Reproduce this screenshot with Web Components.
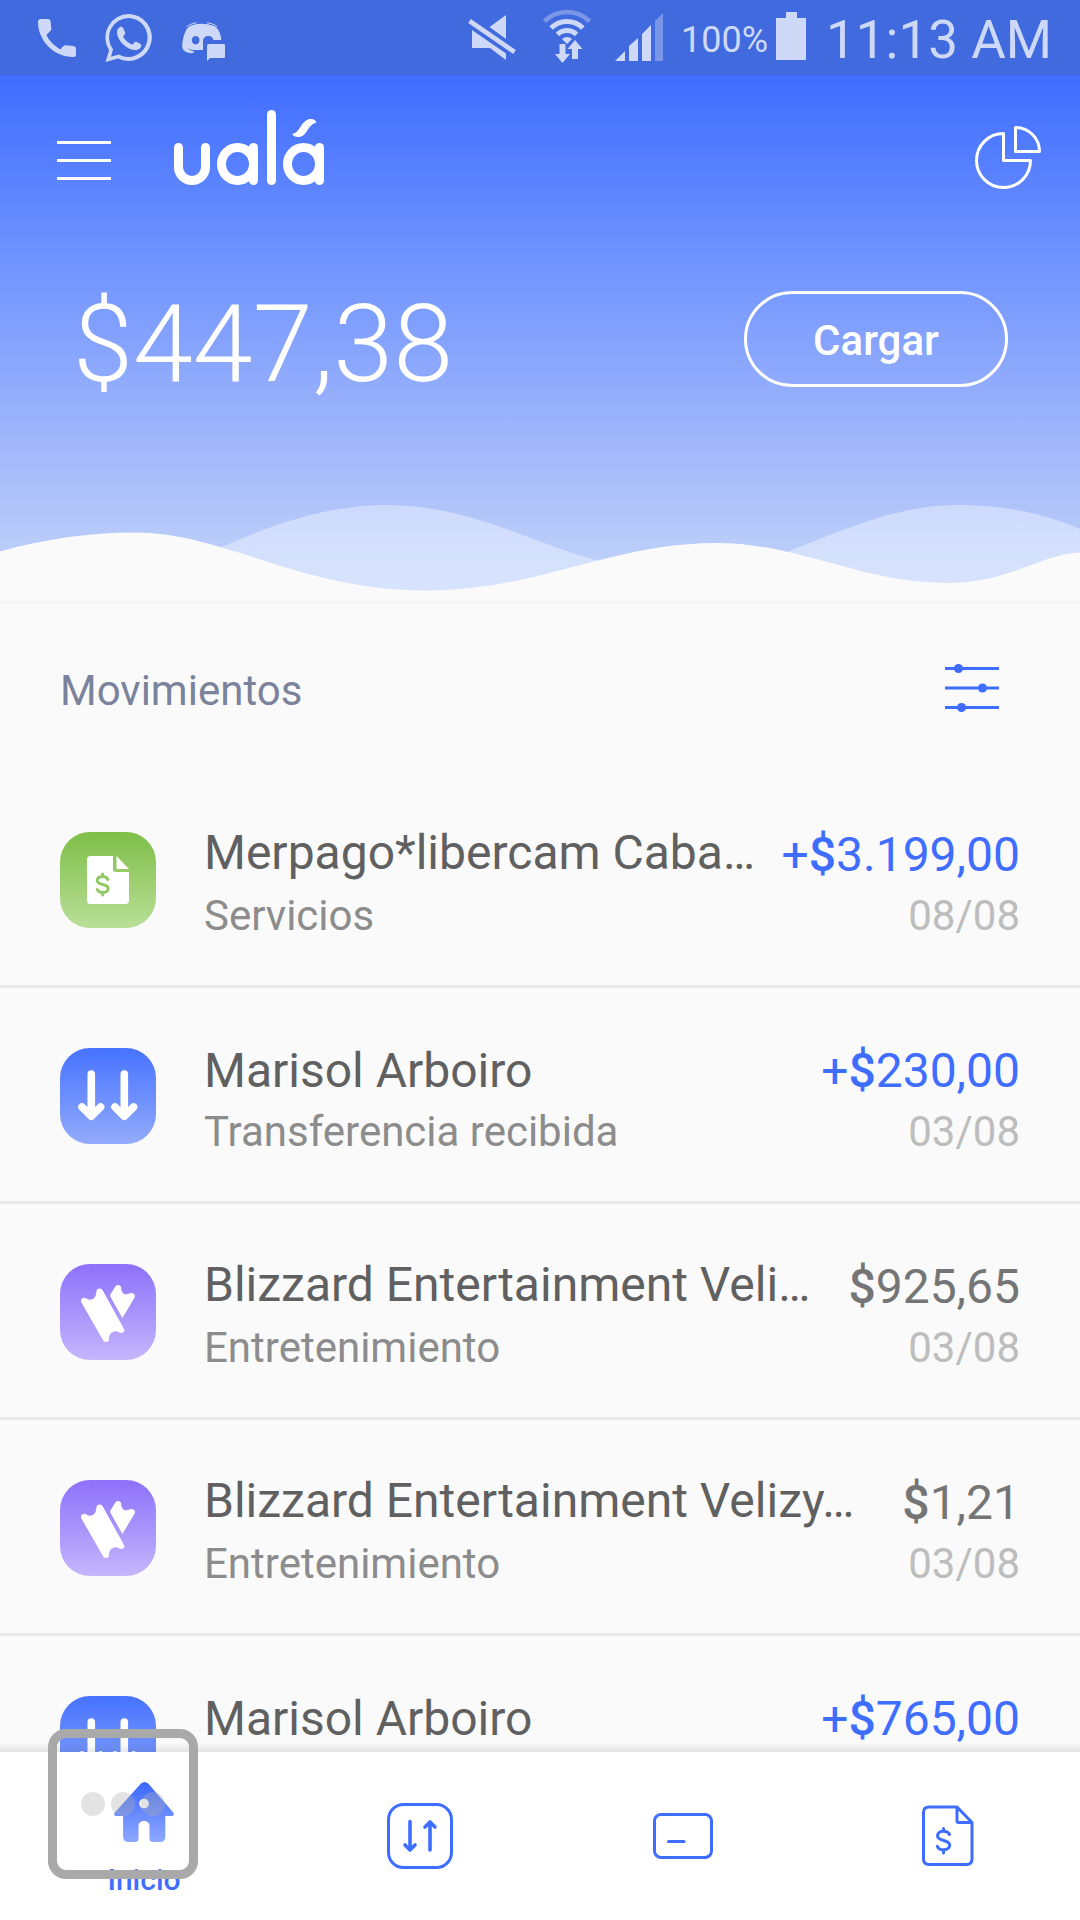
<!DOCTYPE html>
<html lang="es">
<head>
<meta charset="utf-8">
<meta name="viewport" content="width=device-width, initial-scale=1">
<title>Ualá</title>
<style>
  html, body { margin: 0; height: 100%; }
  body {
    background: #fafafa;
    font-family: Roboto, "Noto Sans", sans-serif;
    --blue: #3f6dff;
    overflow: hidden;
  }
</style>
</head>
<body>
<wallet-app>
  <status-bar slot="top" battery="100%" time="11:13 AM"></status-bar>
  <wallet-header slot="top" balance="$447,38">Cargar</wallet-header>
  <section-head>Movimientos</section-head>
  <move-row kind="bill" amount="3.199,00" credit clipped date="08/08">
    Merpago*libercam Caba…<span slot="detail">Servicios</span>
  </move-row>
  <move-row kind="received" amount="230,00" credit date="03/08">
    Marisol Arboiro<span slot="detail">Transferencia recibida</span>
  </move-row>
  <move-row kind="ticket" amount="925,65" clipped date="03/08">
    Blizzard Entertainment Veli…<span slot="detail">Entretenimiento</span>
  </move-row>
  <move-row kind="ticket" amount="1,21" clipped date="03/08">
    Blizzard Entertainment Velizy…<span slot="detail">Entretenimiento</span>
  </move-row>
  <move-row kind="received" amount="765,00" credit date="">
    Marisol Arboiro
  </move-row>
  <bottom-nav slot="bottom"></bottom-nav>
  <floating-menu slot="bottom"></floating-menu>
</wallet-app>

<script>
const define = (name, render) => customElements.define(name, class extends HTMLElement {
  connectedCallback() {
    if (this.shadowRoot) return;
    this.attachShadow({ mode: "open" }).innerHTML = render(this);
  }
});

define("wallet-app", () => `
  <style>
    :host { display: flex; flex-direction: column; height: 100vh; position: relative; overflow: hidden; }
    main { flex: 1; min-height: 0; overflow: hidden; }
  </style>
  <slot name="top"></slot>
  <main><slot></slot></main>
  <slot name="bottom"></slot>
`);

define("status-bar", el => `
  <style>
    :host {
      display: flex; align-items: center; height: 75px; flex: none; box-sizing: border-box;
      padding: 0 28px 0 38px; background: #416ade; color: #ced9f7;
    }
    svg { display: block; fill: currentColor; flex: none; }
    .left, .right { display: flex; align-items: center; }
    .left { gap: 29px; }
    .right { margin-left: auto; }
    .wifi { margin-left: 26px; }
    .signal { margin-left: 23px; }
    .pct { font-size: 36px; line-height: 75px; margin: 5px 8px 0 18px; }
    .time { font-size: 53px; line-height: 75px; margin: 5px 0 0 20px; }
  </style>
  <div class="left">
    <svg width="38" height="75" viewBox="38 0 38 75"><path d="M41 19h7c1.500 0 2.400.9 2.600 2.400l.7 7c.1 1-.2 2-.9 2.700l-4 4c3 6.200 8 11 13.800 14.300l3-3.200c.8-.8 1.700-1.100 2.800-1l7.200.9c1.700.2 2.800 1.200 2.800 2.800v5.500c0 1.700-1 2.600-2.700 2.600C53 57 38 40 38 22c0-2 1-3 3-3z"/></svg>
    <svg width="48" height="75" viewBox="105 0 48 75"><path fill-rule="evenodd" d="M129 14a23.500 23.500 0 1 1-11 44.600L105.500 62l3.600-11.800A23.500 23.500 0 0 1 129 14zm0 4a19.500 19.500 0 0 0-16 31.200l-2 7.600 7.700-2.200A19.500 19.500 0 1 0 129 18z"/><path d="M120 27c1.400-.4 2.600 0 3.300 1.400l1.700 3.700c.4 1 .3 1.800-.5 2.700l-1.500 1.700c2.200 4 5.300 6.500 9.400 8.300l2-2.300c.7-.8 1.500-.9 2.400-.4l3.700 2c.8.500 1 1.100.8 2-.8 2.800-3.600 4.300-6.700 4C126 49.300 118 40.600 117 33.500c-.3-3 1-5.700 3-6.500z"/></svg>
    <svg width="44" height="75" viewBox="180 0 44 75"><path fill-rule="evenodd" d="M188 26q5-2.200 11.500-2.200T212 26c4 1.500 7 8 7.300 14h-8c-.5-2.500-2-4-5-4-3.200 0-5.300 2-5.300 5.500V50h-10.500c-3-.5-4-1.400-5-2.400 1 2 3.500 3.500 7 4-1 1.400-2 1.700-3.300 1.600-4.500-.3-9.200-3-9-7C180.500 38 183 29 188 26zm5.600 10a4 4.200 0 1 0 .1 0z"/><path d="M184.500 27c2-2 5.500-3.600 10-4.200M205 22.800c4 .5 8 1.800 10 4" fill="none" stroke="currentColor" stroke-width="1"/><path d="M207 44h14.500c1 0 1.500.5 1.500 1.500v11c0 1-.5 1.500-1.500 1.500H208l-3 3V46c0-1.300.7-2 2-2z"/></svg>
  </div>
  <div class="right">
    <svg width="48" height="75" viewBox="469 0 48 75"><path d="M507 15v24l-16.500-12zM473 30l34 23.500V60l-16-12h-18z"/><path d="M470.500 21l45 31" stroke="currentColor" stroke-width="4.600"/></svg>
    <svg class="wifi" width="50" height="75" viewBox="543 0 50 75">
      <g fill="none" stroke="currentColor"><path opacity=".4" stroke-width="4.600" d="M545.400 21.400a32 32 0 0 1 45.200 0"/><path stroke-width="5" d="M552.100 28.100a22.500 22.500 0 0 1 31.800 0"/><path stroke-width="5" d="M558.500 34.500a13.500 13.500 0 0 1 19 0"/></g>
      <path d="M568 44l-5-5a7 7 0 0 1 10 0zM560.500 44h6v10h4.500l-7.500 9-7.500-9h4.500zM573 59V49h-4.500l7.500-9 7.500 9h-4.500v10z"/>
    </svg>
    <svg class="signal" width="48" height="75" viewBox="616 0 48 75"><path d="M616 61l10-10v10zM630 46l9-8v23h-9zM643 34l9-9v36h-9z"/><path opacity=".4" d="M656 21l8-8v48h-8z"/></svg>
    <span class="pct">${el.getAttribute("battery")}</span>
    <svg width="30" height="75" viewBox="777 0 30 75"><path d="M787 12h11v6h9v42h-30V18h10z"/></svg>
    <time class="time">${el.getAttribute("time")}</time>
  </div>
`);

define("wallet-header", el => `
  <style>
    :host {
      display: block; flex: none; color: #fff;
      background: linear-gradient(#3f6dff 0%, #6f93ff 35%, #90abfc 58%, #aabef9 77%, #bdd0fa 92%, #c6d6fb 100%);
    }
    .bar { display: flex; align-items: center; height: 168px; padding: 0 39px 0 57px; }
    button { all: unset; box-sizing: border-box; cursor: pointer; display: block; }
    svg { display: block; }
    .logo { margin-left: 63px; }
    .stats { margin-left: auto; }
    .row { display: flex; align-items: flex-start; justify-content: space-between; padding: 48px 72px 108px 73px; }
    .balance { font-size: 108px; line-height: 106px; font-weight: 300; }
    .load {
      width: 264px; height: 96px; border: 3px solid #fff; border-radius: 48px;
      font-size: 42px; line-height: 94px; font-weight: 500; text-align: center;
    }
    .waves { width: 100%; height: 98px; }
  </style>
  <div class="bar">
    <button aria-label="Menú"><svg width="54" height="54" viewBox="57 132 54 54" stroke="#fff" stroke-width="3"><path d="M57 142.500h54M57 160.500h54M57 178.500h54"/></svg></button>
    <svg class="logo" role="img" aria-label="Logo" width="150" height="104" viewBox="174 107 150 104" fill="none" stroke="#fff" stroke-width="9" stroke-linecap="round">
      <path d="M178.500 147.500v19.500a13.500 13.500 0 0 0 27 0v-19.500"/>
      <ellipse cx="237.500" cy="164" rx="16" ry="16.500"/><path d="M253.500 147.500v33"/>
      <path d="M271.500 114.500v66"/>
      <ellipse cx="303.500" cy="164" rx="16" ry="16.500"/><path d="M319.500 147.500v33"/>
      <path fill="#fff" stroke="none" d="M292.300 134c4-1 6-3.500 9-8.500 3.500-5 6.500-6.500 9.700-6.500 3 0 5 1.500 5.500 3.800-4.500.7-6.500 3.700-9.500 8.200-3 4.500-5.500 6-8.700 6-3 0-5.300-1-6-3z"/>
    </svg>
    <button class="stats" aria-label="Estadísticas"><svg width="66" height="72" viewBox="975 123 66 72" fill="none" stroke="#fff" stroke-width="3"><path stroke-linejoin="round" d="M1003.500 133.500v27h27a27 27 0 1 1-27-27zM1015.500 127.500v24h24a24 24 0 0 0-24-24z"/></svg></button>
  </div>
  <div class="row">
    <div class="balance">${el.getAttribute("balance")}</div>
    <button class="load"><slot></slot></button>
  </div>
  <svg class="waves" viewBox="0 505 1080 98" preserveAspectRatio="none">
    <path fill="#f2f6ff" fill-opacity=".45" d="M150 603V580C222 547 300 505 386 505C470 505 530 543 603 562L640 603ZM740 603V575L789 551C840 532 895 505 957 505C1010 505 1050 516 1080 529V603Z"/>
    <path fill="#fafafa" d="M0 551.500C45 539 90 532.500 134 532.500C225 532.500 300 590.500 427 590.500C540 590.500 610 543 716 543C800 543 860 583 948 583C1010 583 1040 554 1080 552.500V603H0Z"/>
    <path fill="#f0f2fb" d="M0 602h1080v1H0z"/>
  </svg>
`);

define("section-head", () => `
  <style>
    :host { display: flex; align-items: flex-start; justify-content: space-between; padding: 61px 72px 54px 60px; }
    h2 { margin: 0; font-size: 42px; line-height: 54px; font-weight: 400; color: #7a829c; }
    button { all: unset; cursor: pointer; display: block; }
    svg { display: block; fill: var(--blue); }
  </style>
  <h2><slot></slot></h2>
  <button aria-label="Filtrar"><svg width="72" height="48" viewBox="936 664 72 48"><path d="M945 667h54v3h-54zM945 686.500h54v3h-54zM945 706h54v3h-54z"/><circle cx="958.500" cy="668.500" r="4.600"/><circle cx="982.500" cy="688" r="4.600"/><circle cx="961.500" cy="707.500" r="4.600"/></svg></button>
`);

const glyphs = {
  bill: ["#7fbe48", "#b8df98", `
    <path fill="#fff" d="M30.500 24H53v13.500q0 2.500 2.500 2.500H69v28.500q0 3.500-3.500 3.500h-35q-3.500 0-3.500-3.500v-41q0-3.500 3.500-3.500zM56.500 24L69 37H57.500q-1 0-1-1z"/>
    <path fill="none" stroke="#92c964" stroke-width="3" stroke-linecap="round" stroke-linejoin="round" d="M48 47.500c-1-2-3-3-5.400-3-3 0-5.400 1.500-5.400 4 0 5.500 11 2.500 11 8 0 2.500-2.600 4-5.600 4-2.600 0-4.500-1-5.400-3M42.600 42v2.500M42.600 60.500V63"/>`],
  received: ["#4672ff", "#93abfb", `
    <path fill="none" stroke="#fff" stroke-width="7.600" stroke-linecap="round" stroke-linejoin="round" d="M31.300 26v42M22 59l9.300 9.200 9.300-9.200M64.300 26v42M55 59l9.300 9.200 9.300-9.200"/>`],
  ticket: ["#8d71fb", "#c4b6fd", `
    <path fill="#fff" d="M21.400 38.500q-1.400-3 1.600-4.500 1.500-.8 3.500.6c4.500 3 9.500 0 9.800-6 .1-3 1.200-3.600 2.200-3.900 2-.7 3.500.3 4.300 1.800L64 65q1 2.300-.7 3.200-2 1.400-4 .2c-5-3-10.500 1-10.300 6 0 2.600-1.300 3.600-3 3.700-1.600 0-2.500-1-3.200-2.300z"/>
    <path fill="#fff" d="M50.400 30.500l5-8q1.500-2 4-1.200 1.600.7 1.700 3c.3 5 4 7.400 8.200 5.300 2-1 3.600-.6 4.700.4q1.700 1.500.5 3.700L62.400 54 50.400 32.700q-.6-1.100 0-2.200z"/>`]
};

define("move-row", el => {
  const [from, to, art] = glyphs[el.getAttribute("kind")];
  return `
  <style>
    :host {
      display: grid; grid-template-columns: 96px minmax(0, 1fr) auto; column-gap: 48px; align-items: start;
      padding: 51px 60px 40px; border-bottom: 3px solid #e8e8ec;
    }
    .icon { width: 96px; height: 96px; margin-top: 9px; border-radius: 30px; background: linear-gradient(${from}, ${to}); }
    svg { display: block; }
    .text { margin-right: -48px; white-space: nowrap; }
    .title, .amount { font-size: 48px; line-height: 64px; color: #606060; }
    :host([clipped]) .title { line-height: 60px; padding-bottom: 4px; }
    .detail, .date { font-size: 42px; line-height: 58px; min-height: 58px; color: #8c8c8c; }
    .side { text-align: right; }
    .amount { color: #757575; }
    .amount b { font-weight: 500; }
    :host([credit]) .amount { color: var(--blue); }
    .date { color: #bdbdbd; }
  </style>
  <div class="icon"><svg width="96" height="96" viewBox="0 0 96 96">${art}</svg></div>
  <div class="text"><div class="title"><slot></slot></div><div class="detail"><slot name="detail"></slot></div></div>
  <div class="side"><div class="amount">${el.hasAttribute("credit") ? "+" : ""}<b>$</b>${el.getAttribute("amount")}</div><div class="date">${el.getAttribute("date")}</div></div>`;
});

define("bottom-nav", () => `
  <style>
    :host { display: block; flex: none; background: #fff; position: relative; }
    :host::before {
      content: ""; position: absolute; left: 0; right: 0; bottom: 100%; height: 9px;
      background: linear-gradient(rgba(0,0,0,0), rgba(0,0,0,.09));
    }
    nav { display: grid; grid-template-columns: 288fr 264fr 264fr 264fr; height: 168px; }
    a { display: flex; flex-direction: column; align-items: center; justify-content: center; color: var(--blue); text-decoration: none; }
    a.on { justify-content: flex-start; padding-top: 24px; }
    svg { display: block; fill: none; stroke: currentColor; stroke-width: 3; stroke-linecap: round; stroke-linejoin: round; }
    span { font-size: 30px; line-height: 36px; font-weight: 500; margin-top: 14px; }
  </style>
  <nav>
    <a class="on" href="#inicio">
      <svg width="72" height="72" viewBox="108 1776 72 72" style="stroke:none">
        <defs><linearGradient id="h" x1="0" y1="0" x2="0" y2="1"><stop offset="0" stop-color="#3a68ff"/><stop offset="1" stop-color="#8fa8ff"/></linearGradient></defs>
        <path fill="url(#h)" fill-rule="evenodd" d="M141 1783.500q3.500-3 7.200 0L173.300 1812.500q1.700 3.500-1.800 3.500H165.300v20.500q0 5.500-5.500 5.500h-6.800q-3.500 0-3.500-3.500v-12q0-5.500-5.500-5.500t-5.500 5.500v12q0 3.500-3.500 3.500h-6.400q-5.500 0-5.500-5.500V1816h-6.500q-3.600 0-1.800-3.500zM144 1798.700a4.800 4.800 0 1 0 .1 0z"/>
      </svg>
      <span>Inicio</span>
    </a>
    <a href="#transferir" aria-label="Transferir"><svg width="66" height="66" viewBox="387 1803 66 66"><rect x="388.500" y="1804.500" width="63" height="63" rx="15"/><path stroke-width="3.600" d="M410 1821.500v28.500M405 1845l5 5 5-5M430 1850v-28M425 1827l5-5 5 5"/></svg></a>
    <a href="#tarjeta" aria-label="Tarjeta"><svg width="62" height="46" viewBox="652 1813 62 46"><rect x="653.500" y="1814.500" width="57" height="43" rx="6.500"/><path d="M667.500 1841.500h15.500"/></svg></a>
    <a href="#pagos" aria-label="Pagos"><svg width="52" height="62" viewBox="922 1806.500 52 62"><path d="M957 1808.500h-28q-5.500 0-5.500 5.500v46.500q0 5.500 5.500 5.500h37.500q5.500 0 5.500-5.500V1824zM957 1808.500v14q0 1.500 1.500 1.500H972"/><path d="M949.500 1836c-1-2-3.200-3.200-6-3.200-3.300 0-6 1.700-6 4.500 0 6 12.200 3.300 12.200 9.300 0 2.800-2.800 4.700-6.200 4.700-3 0-5.200-1.300-6.200-3.500M943.500 1830v2.500M943.500 1851.500v3"/></svg></a>
  </nav>
`);

define("floating-menu", () => `
  <style>
    :host { position: absolute; left: 48px; bottom: 41px; }
    button {
      all: unset; box-sizing: border-box; display: flex; align-items: center; justify-content: center; gap: 6px;
      width: 150px; height: 150px; border: 9px solid #a9a9a9; border-radius: 18px;
    }
    i { width: 24px; height: 24px; border-radius: 50%; background: rgba(172,172,172,.34); }
  </style>
  <button aria-label="Menú flotante"><i></i><i></i><i></i></button>
`);
</script>
</body>
</html>
